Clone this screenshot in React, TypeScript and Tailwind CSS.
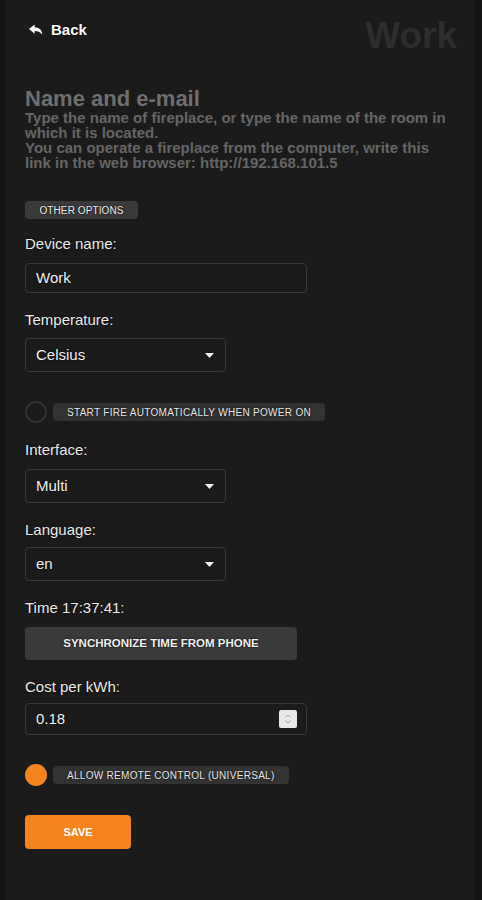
function Caret() {
  return (
    <svg width="9" height="5" viewBox="0 0 9 5" className="shrink-0">
      <path d="M0 0 L9 0 L4.5 5 Z" fill="#f2f2f2" />
    </svg>
  );
}

function Select({ value }: { value: string }) {
  return (
    <div className="w-[201px] h-[34px] border border-[#3a3a3a] rounded-[4px] flex items-center justify-between pl-[10px] pr-[11px] text-[15px] text-[#f2f2f2] [text-shadow:0_0_2px_#000]">
      <span>{value}</span>
      <Caret />
    </div>
  );
}

function Label({ children }: { children: React.ReactNode }) {
  return <div className="text-[15px] text-[#ececec] leading-[16px] [text-shadow:0_0_2px_#000]">{children}</div>;
}

function Pill({ children, on }: { children: React.ReactNode; on?: boolean }) {
  return (
    <div className="flex items-center gap-[6px]">
      <div
        className={
          on
            ? "w-[22px] h-[22px] rounded-full bg-[#f5841f]"
            : "w-[22px] h-[22px] rounded-full border-2 border-[#333333]"
        }
      />
      <div className="h-[18px] px-[14px] rounded-[4px] bg-[#333333] flex items-center text-[10px] text-[#e8e8e8] tracking-[0.3px] [text-shadow:0_0_2px_#000]">
        {children}
      </div>
    </div>
  );
}

export default function App() {
  return (
    <div className="w-[482px] h-[900px] bg-[#141414] pl-[5px] pr-[7px]" style={{ fontFamily: '"Liberation Sans", Arial, sans-serif' }}>
      <div className="h-full bg-[#1b1b1b] pl-[20px] pr-[18px] flex flex-col">
        <div className="flex items-start justify-between h-[62px]">
          <div className="flex items-center gap-[7px] pl-[4px] pt-[21px] text-white font-bold text-[15px] leading-[18px] [text-shadow:0_0_2px_#000]">
            <svg width="15" height="12" viewBox="0 0 16 12">
              <path d="M6 0 L0 5 L6 10 L6 7 C10 7 12 8 14 11 C14 6 11 3 6 3 Z" fill="#ffffff" />
            </svg>
            <span>Back</span>
          </div>
          <div className="text-[37px] font-bold text-[#2e2e2e] leading-none pt-[17px]">Work</div>
        </div>

        <div className="mt-[26px] text-[22px] font-bold text-[#6f6f6f] leading-[22px]">Name and e-mail</div>
        <div className="text-[15px] font-bold text-[#666666] leading-[15px] pr-[6px]">
          Type the name of fireplace, or type the name of the room in which it is located.
          <br />
          You can operate a fireplace from the computer, write this link in the web browser: http://192.168.101.5
        </div>

        <div className="mt-[31px] self-start h-[18px] w-[113px] rounded-[4px] bg-[#3a3a3a] flex items-center justify-center text-[10px] text-[#f0f0f0] tracking-[0.1px] [text-shadow:0_0_2px_#000]">
          OTHER OPTIONS
        </div>

        <div className="mt-[17px]">
          <Label>Device name:</Label>
        </div>
        <div className="mt-[11px] w-[282px] h-[30px] border border-[#3a3a3a] rounded-[4px] flex items-center pl-[10px] text-[15px] text-[#f2f2f2] [text-shadow:0_0_2px_#000]">
          Work
        </div>

        <div className="mt-[19px]">
          <Label>Temperature:</Label>
        </div>
        <div className="mt-[10px]">
          <Select value="Celsius" />
        </div>

        <div className="mt-[29px]">
          <Pill>START FIRE AUTOMATICALLY WHEN POWER ON</Pill>
        </div>

        <div className="mt-[19px]">
          <Label>Interface:</Label>
        </div>
        <div className="mt-[11px]">
          <Select value="Multi" />
        </div>

        <div className="mt-[19px]">
          <Label>Language:</Label>
        </div>
        <div className="mt-[9px]">
          <Select value="en" />
        </div>

        <div className="mt-[19px]">
          <Label>Time 17:37:41:</Label>
        </div>
        <div className="mt-[11px] w-[272px] h-[33px] rounded-[4px] bg-[#3a3a3a] flex items-center justify-center text-[11.5px] font-bold text-[#f2f2f2] [text-shadow:0_0_2px_#000]">
          SYNCHRONIZE TIME FROM PHONE
        </div>

        <div className="mt-[19px]">
          <Label>Cost per kWh:</Label>
        </div>
        <div className="mt-[8px] w-[282px] h-[32px] border border-[#3a3a3a] rounded-[4px] flex items-center justify-between pl-[10px] pr-[9px] text-[15px] text-[#f2f2f2] [text-shadow:0_0_2px_#000]">
          <span>0.18</span>
          <div className="w-[18px] h-[18px] bg-[#e8e8e8] rounded-[2px] flex flex-col items-center justify-center gap-[2px]">
            <svg width="6" height="4" viewBox="0 0 6 4"><path d="M0.5 3.5 L3 1 L5.5 3.5" stroke="#9a9a9a" fill="none" /></svg>
            <svg width="6" height="4" viewBox="0 0 6 4"><path d="M0.5 0.5 L3 3 L5.5 0.5" stroke="#9a9a9a" fill="none" /></svg>
          </div>
        </div>

        <div className="mt-[29px]">
          <Pill on>ALLOW REMOTE CONTROL (UNIVERSAL)</Pill>
        </div>

        <div className="mt-[29px] w-[106px] h-[34px] rounded-[4px] bg-[#f5841f] flex items-center justify-center text-[11px] font-bold text-white">
          SAVE
        </div>
      </div>
    </div>
  );
}
